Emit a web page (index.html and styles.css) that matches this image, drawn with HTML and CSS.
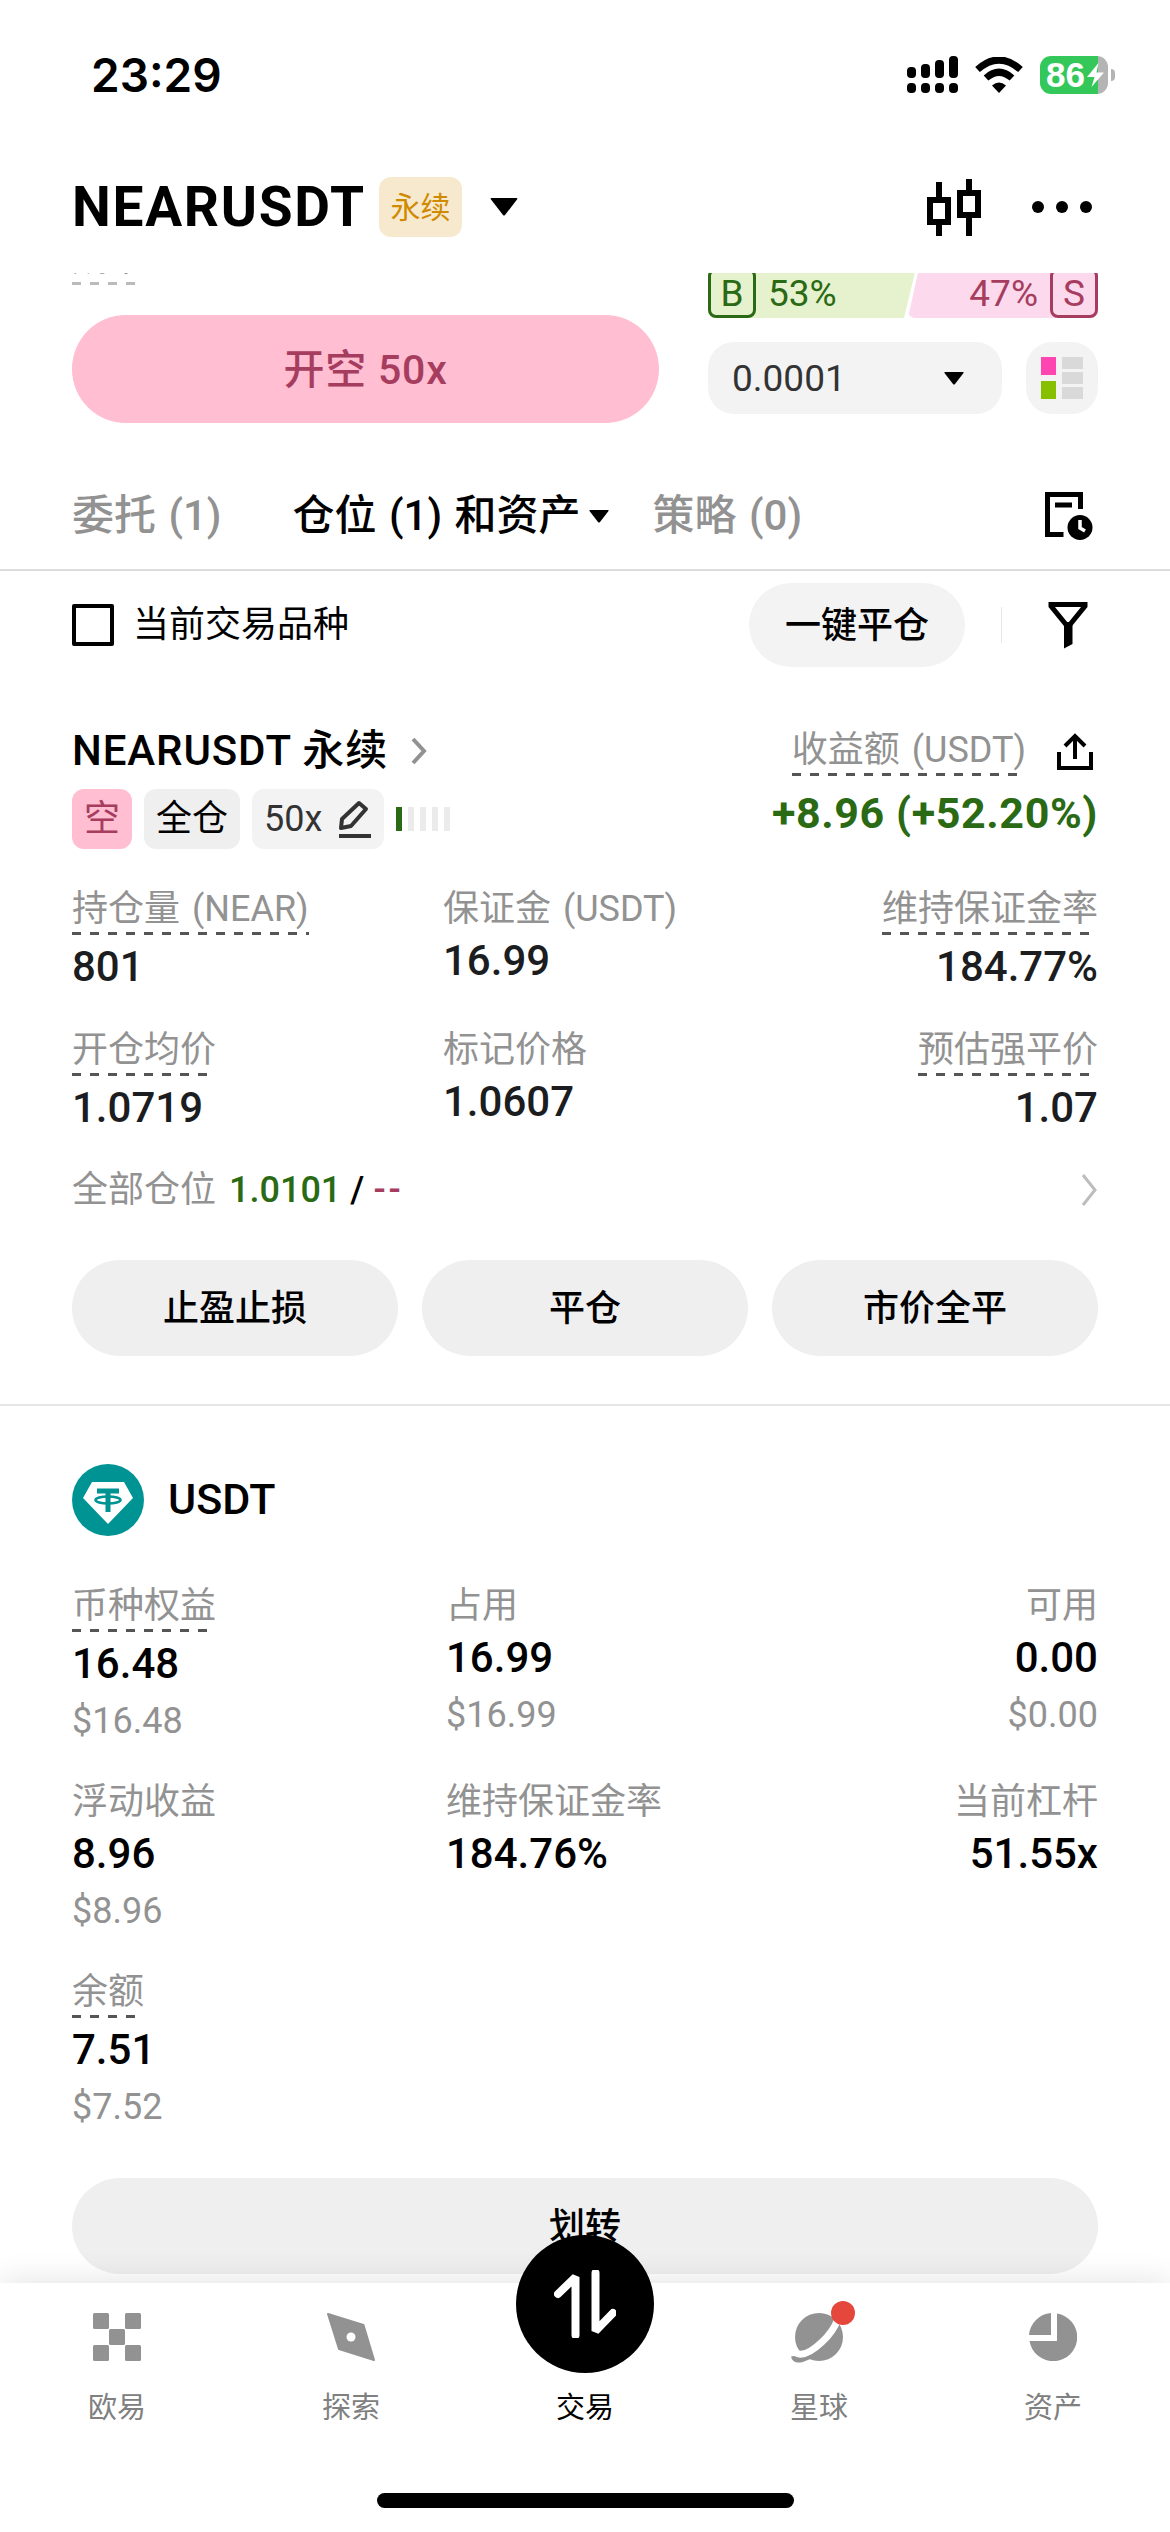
FILE: index.html
```html
<!DOCTYPE html>
<html lang="zh-CN">
<head>
<meta charset="utf-8">
<title>NEARUSDT 永续</title>
<link rel="stylesheet" href="styles.css">
</head>
<body>
<div class="screen">
  <div class="status">
    <span class="clock">23:29</span>
    <div class="status-icons">
      <svg width="51" height="37" viewBox="0 0 51 37"><rect x="0" y="11" width="9" height="11" rx="4"/><rect x="14" y="8" width="9" height="14" rx="4"/><rect x="28" y="4" width="9" height="18" rx="4"/><rect x="42" y="0" width="9" height="22" rx="4"/><rect x="0" y="27" width="9" height="10" rx="4"/><rect x="14" y="27" width="9" height="10" rx="4"/><rect x="28" y="27" width="9" height="10" rx="4"/><rect x="42" y="27" width="9" height="10" rx="4"/></svg>
      <svg class="wifi" width="48" height="36" viewBox="0 0 48 36"><path d="M24 36l-7-7.500q7-6 14 0z"/><path d="M2.500 12.500Q24-6.500 45.500 12.500M11 21Q24 9.500 37 21" fill="none" stroke="#000" stroke-width="7"/></svg>
      <div class="battery"><div class="battery-body"><b>86</b><svg width="17" height="24" viewBox="0 0 17 24"><path d="M11.500 0L0 14h7.500L4.500 24 17 9.500H9.500z" fill="#fff"/></svg></div><i class="battery-nub"></i></div>
    </div>
  </div>

  <header class="header">
    <h1>NEARUSDT</h1>
    <span class="perp">永续</span>
    <svg class="caret-lg" width="28" height="18" viewBox="0 0 28 18"><path d="M1.500 0h25q1.500 0 .5 1.500L15 17q-1 1-2 0L1 1.500Q0 0 1.500 0z"/></svg>
    <svg class="candles" width="54" height="57" viewBox="0 0 54 57" fill="none" stroke="#000" stroke-width="6"><path d="M12 3v54M42 0v57"/><rect x="3" y="21" width="18" height="22" fill="#fff"/><rect x="33" y="14" width="18" height="22" fill="#fff"/></svg>
    <svg width="60" height="12" viewBox="0 0 60 12"><circle cx="6" cy="6" r="6"/><circle cx="30" cy="6" r="6"/><circle cx="54" cy="6" r="6"/></svg>
  </header>

  <main class="content">
    <section class="order">
      <div class="order-form">
        <span class="label dashed faint">成本</span>
        <button class="short">开空 50x</button>
      </div>
      <div class="book">
        <div class="ratio">
          <div class="buy"><span class="side">B</span><span>53%</span></div>
          <div class="sell"><span>47%</span><span class="side">S</span></div>
        </div>
        <div class="depth">
          <div class="select"><span>0.0001</span><svg width="20" height="13" viewBox="0 0 20 13"><path d="M1 0h18q1 0 .5 1L11 12q-1 1-2 0L.5 1Q0 0 1 0z"/></svg></div>
          <div class="mode"><svg width="42" height="42" viewBox="0 0 42 42"><path fill="#ff46b0" d="M0 0h15v18H0z"/><path fill="#86c000" d="M0 24h15v18H0z"/><path fill="#d9d9d9" d="M21 0h21v12H21zM21 15h21v12H21zM21 30h21v12H21z"/></svg></div>
        </div>
      </div>
    </section>

    <nav class="tabs">
      <span>委托 (1)</span>
      <span class="tab-on">仓位 (1) 和资产<svg width="20" height="13" viewBox="0 0 20 13"><path d="M1 0h18q1 0 .5 1L11 12q-1 1-2 0L.5 1Q0 0 1 0z"/></svg></span>
      <span>策略 (0)</span>
      <svg class="history" width="48" height="48" viewBox="0 0 48 48"><path d="M18.500 42.500h-16v-40h33V17M10 13h17" fill="none" stroke="#000" stroke-width="5"/><circle cx="35" cy="35.500" r="12.500"/><path d="M35 28v8l5 3" fill="none" stroke="#fff" stroke-width="3.500"/></svg>
    </nav>

    <div class="filter">
      <i class="checkbox"></i>
      <span class="filter-name">当前交易品种</span>
      <button class="close-all">一键平仓</button>
      <i class="rule"></i>
      <svg width="40" height="47" viewBox="0 0 40 47"><path d="M3 2.500h34v1.500L22 22.500h-4L3 4z" fill="none" stroke="#000" stroke-width="5"/><path d="M16 22h8.500v20L16 46.500z"/></svg>
    </div>

    <section class="position">
      <div class="pos-head">
        <div>
          <h2>NEARUSDT 永续<svg width="18" height="28" viewBox="0 0 18 28"><path d="M3 2l11 12L3 26" fill="none" stroke="#929292" stroke-width="4"/></svg></h2>
          <div class="tags">
            <span class="tag short-tag">空</span>
            <span class="tag">全仓</span>
            <span class="tag lever">50x<svg width="34" height="38" viewBox="0 0 34 38"><path d="M3 28l1-9L21 3l7 6-15 17z" fill="none" stroke="#333" stroke-width="4" stroke-linejoin="round"/><path d="M1 34h32v4H1z" fill="#333"/></svg></span>
            <span class="risk"><i class="risk-on"></i><i></i><i></i><i></i><i></i></span>
          </div>
        </div>
        <div class="pnl">
          <div class="pnl-label"><span class="label dashed">收益额 (USDT)</span><svg width="36" height="37" viewBox="0 0 36 37" fill="none" stroke="#000" stroke-width="4"><path d="M2 19v16h32V19M18 26V3M8 13L18 3l10 10"/></svg></div>
          <div class="pnl-value">+8.96 (+52.20%)</div>
        </div>
      </div>

      <div class="stats pos-stats">
        <div><span class="label dashed">持仓量 (NEAR)</span><span class="value">801</span></div>
        <div><span class="label">保证金 (USDT)</span><span class="value">16.99</span></div>
        <div><span class="label dashed">维持保证金率</span><span class="value">184.77%</span></div>
        <div><span class="label dashed">开仓均价</span><span class="value">1.0719</span></div>
        <div><span class="label">标记价格</span><span class="value">1.0607</span></div>
        <div><span class="label dashed">预估强平价</span><span class="value">1.07</span></div>
      </div>

      <div class="tpsl"><span class="muted">全部仓位</span><span class="up">1.0101</span><span>/</span><span class="down">--</span><svg width="17" height="34" viewBox="0 0 17 34"><path d="M2 2l12 15L2 32" fill="none" stroke="#bdbdbd" stroke-width="3"/></svg></div>

      <div class="actions"><button>止盈止损</button><button>平仓</button><button>市价全平</button></div>
    </section>

    <section class="asset">
      <div class="coin"><svg width="72" height="72" viewBox="0 0 72 72"><circle cx="36" cy="36" r="36" fill="#009393"/><path d="M20 18h32l9 16-25 26-25-26z" fill="#fff"/><g fill="none" stroke="#009393"><path d="M25 27h22" stroke-width="5"/><path d="M36 28v20" stroke-width="5"/><ellipse cx="36" cy="36" rx="12.500" ry="3.500" stroke-width="2.500"/></g></svg><span>USDT</span></div>
      <div class="stats asset-stats">
        <div><span class="label dashed">币种权益</span><span class="value">16.48</span><span class="sub">$16.48</span></div>
        <div><span class="label">占用</span><span class="value">16.99</span><span class="sub">$16.99</span></div>
        <div><span class="label">可用</span><span class="value">0.00</span><span class="sub">$0.00</span></div>
        <div><span class="label">浮动收益</span><span class="value">8.96</span><span class="sub">$8.96</span></div>
        <div><span class="label">维持保证金率</span><span class="value">184.76%</span></div>
        <div><span class="label">当前杠杆</span><span class="value">51.55x</span></div>
        <div><span class="label dashed">余额</span><span class="value">7.51</span><span class="sub">$7.52</span></div>
      </div>
      <button class="transfer">划转</button>
    </section>
  </main>

  <footer class="tabbar">
    <div class="tabbar-items">
      <div><svg width="48" height="48" viewBox="0 0 48 48"><g fill="#929292"><rect width="16" height="16" rx="1.500"/><rect x="32" width="16" height="16" rx="1.500"/><rect x="16" y="16" width="16" height="16" rx="1.500"/><rect y="32" width="16" height="16" rx="1.500"/><rect x="32" y="32" width="16" height="16" rx="1.500"/></g></svg><span>欧易</span></div>
      <div><svg width="48" height="48" viewBox="0 0 48 48"><path d="M1 1l35.500 11L47 47 12 36z" fill="#929292" stroke="#929292" stroke-width="2" stroke-linejoin="round"/><circle cx="24" cy="24" r="4.500" fill="#fff"/></svg><span>探索</span></div>
      <div class="trade"><div class="trade-disc"><svg width="62" height="68" viewBox="0 0 62 68"><path d="M21.500 65V7L4 24M41.500 3v58L59 43" fill="none" stroke="#fff" stroke-width="8" stroke-linejoin="bevel" stroke-linecap="round"/></svg></div><span>交易</span></div>
      <div class="planet"><svg width="62" height="62" viewBox="0 0 62 62"><circle cx="31" cy="31" r="24" fill="#929292"/><path d="M6 50q1 5 8 3 10-3 15-8" fill="none" stroke="#929292" stroke-width="6"/><path d="M8 47q9 5 26-11Q45 26 50 13" fill="none" stroke="#fff" stroke-width="7"/></svg><i class="dot"></i><span>星球</span></div>
      <div><svg width="48" height="48" viewBox="0 0 48 48"><path d="M22 0v22H0A24 24 0 0 1 22 0zM28 .5A24 24 0 1 1 .5 28H28z" fill="#929292"/></svg><span>资产</span></div>
    </div>
    <i class="home"></i>
  </footer>
</div>
</body>
</html>
```
FILE: styles.css
```css
* { box-sizing: border-box; }
body { margin: 0; background: #fff; color: #000; font-family: Roboto, "Noto Sans CJK SC", sans-serif; }
h1, h2 { margin: 0; }
i { display: block; flex: none; }
svg { display: block; flex: none; }
span, b, h1, h2, button { white-space: nowrap; }
button { display: block; border: 0; padding: 2px 0 0; margin: 0; font: 500 36px/1 Roboto, "Noto Sans CJK SC", sans-serif; color: #000; }

.screen { width: 1170px; height: 2532px; display: flex; flex-direction: column; overflow: hidden; }

/* status bar */
.status { height: 149px; padding: 0 55px 0 91px; display: flex; align-items: center; justify-content: space-between; }
.clock { font: 600 46px/48px Inter, sans-serif; }
.status-icons { display: flex; align-items: center; }
.wifi { margin: 0 17px; }
.battery { display: flex; align-items: center; gap: 3px; }
.battery-body { width: 68px; height: 38px; border-radius: 11px; padding-left: 6px; background: linear-gradient(90deg, #34c85a 58px, #b4b4b4 58px); display: flex; align-items: center; }
.battery-body b { font: 700 35px/38px "Liberation Sans", sans-serif; color: #fff; }
.battery-body svg { margin-left: 2px; }
.battery-nub { width: 4px; height: 12px; border-radius: 0 4px 4px 0; background: #b4b4b4; }

/* title bar */
.header { height: 124px; padding: 0 78px 8px 72px; display: flex; align-items: center; }
.header h1 { font-size: 55px; line-height: 60px; font-weight: 700; width: 293px; letter-spacing: 1.7px; }
.perp { margin-left: 14px; width: 83px; height: 60px; border-radius: 12px; background: #f7e9cd; color: #d08a00; font-size: 30px; line-height: 61px; text-align: center; }
.caret-lg { margin-left: 28px; }
.candles { margin-left: auto; margin-right: 51px; }

/* order panel */
.content { flex: 1; overflow: hidden; }
.order { margin-top: -40px; padding: 0 72px; display: flex; justify-content: space-between; }
.label { display: block; width: fit-content; height: 52px; font-size: 36px; line-height: 52px; word-spacing: 3px; color: #929292; }
.dashed { margin-bottom: 6px; background: repeating-linear-gradient(90deg, #555 0 9px, transparent 9px 18px) left bottom / 100% 3px no-repeat; }
.faint { background-image: repeating-linear-gradient(90deg, #bbb 0 9px, transparent 9px 18px); }
.short { width: 587px; height: 108px; margin-top: 30px; border-radius: 54px; background: #ffbed1; color: #a63d5f; font-size: 41px; letter-spacing: .8px; }
.order-form .label { margin-bottom: 0; }
.book { width: 390px; padding-top: 35px; }
.ratio { display: flex; justify-content: space-between; font-size: 37px; line-height: 51px; }
.ratio > div { display: flex; height: 50px; border-radius: 7px; }
.buy { width: 208px; gap: 12px; background: #e6f1cd; color: #2a6a14; clip-path: polygon(0 0, 100% 0, 196px 100%, 0 100%); }
.sell { width: 190px; margin-left: -8px; gap: 12px; justify-content: flex-end; background: #fcd9ec; color: #a63d5f; clip-path: polygon(11px 0, 100% 0, 100% 100%, 0 100%); }
.side { width: 48px; border: 3px solid; border-radius: 8px; line-height: 45px; text-align: center; }
.depth { margin-top: 24px; display: flex; justify-content: space-between; }
.select { width: 294px; height: 72px; padding: 0 38px 0 24px; border-radius: 26px; background: #f3f3f3; display: flex; align-items: center; justify-content: space-between; font-size: 37px; color: #333; }
.mode { width: 72px; height: 72px; border-radius: 26px; background: #f3f3f3; display: grid; place-items: center; }

/* tabs */
.tabs { margin-top: 46px; height: 102px; padding: 0 77px 6px 72px; border-bottom: 2px solid #dcdcdc; display: flex; align-items: center; font-size: 42px; font-weight: 500; line-height: 50px; word-spacing: 2px; color: #929292; }
.tabs .tab-on { margin: 0 44px 0 71px; color: #000; display: flex; align-items: center; gap: 8px; }
.history { margin-left: auto; }

/* filter row */
.filter { height: 108px; padding: 0 82px 0 72px; display: flex; align-items: center; }
.checkbox { width: 42px; height: 42px; border: 4px solid #000; border-radius: 2px; }
.filter-name { margin-left: 19px; font-size: 36px; line-height: 50px; }
.close-all { margin-left: auto; width: 216px; height: 84px; border-radius: 42px; background: #f3f3f3; }
.rule { margin: 0 46px 0 36px; width: 1px; height: 36px; background: #e6e6e6; }

/* position card */
.position { padding: 45px 72px 48px; border-bottom: 2px solid #e6e6e6; }
.pos-head { display: flex; justify-content: space-between; }
h2 { height: 52px; margin-bottom: 13px; font-size: 42px; line-height: 52px; font-weight: 500; letter-spacing: .9px; padding-top: 1px; display: flex; align-items: center; gap: 22px; }
.tags { display: flex; align-items: center; gap: 12px; }
.tag { height: 60px; padding: 0 12px; border-radius: 12px; background: #efefef; font-size: 36px; line-height: 60px; }
.short-tag { background: #ffbed1; color: #a63d5f; }
.lever { width: 132px; background: #f3f3f3; color: #333; display: flex; align-items: center; justify-content: space-between; }
.risk { display: flex; gap: 6px; }
.risk i { width: 6px; height: 24px; background: #ebebeb; }
.risk .risk-on { background: #2a6a14; }
.pnl-label { display: flex; justify-content: flex-end; gap: 31px; padding-right: 5px; }
.pnl-label svg { margin-top: 9px; }
.pnl-value { font-size: 43px; line-height: 60px; font-weight: 700; letter-spacing: .6px; color: #2a6a14; text-align: right; margin-top: 1px; }
.stats { display: grid; }
.stats > div:nth-child(3n) { justify-self: end; display: flex; flex-direction: column; align-items: flex-end; }
.pos-stats { margin-top: 34px; grid-template-columns: 371px 371px 1fr; grid-auto-rows: 141px; }
.pos-stats .value { color: #1b1d20; }
.value { display: block; height: 50px; font-size: 42px; line-height: 51px; font-weight: 500; }
.tpsl { height: 50px; display: flex; align-items: center; font-size: 36px; line-height: 50px; font-weight: 500; }
.tpsl svg { margin-left: auto; }
.muted { color: #929292; font-weight: 400; margin-right: 13px; }
.up { color: #2a6a14; margin-right: 9px; }
.down { color: #a63d5f; margin-left: 9px; letter-spacing: 3px; }
.actions { margin-top: 45px; display: grid; grid-template-columns: repeat(3, 1fr); gap: 24px; }
.actions button, .transfer { height: 96px; border-radius: 48px; background: #efefef; }

/* asset card */
.asset { padding: 58px 72px 0; }
.coin { display: flex; align-items: center; gap: 24px; font-size: 43px; line-height: 50px; font-weight: 500; }
.coin span { margin-bottom: 2px; }
.asset-stats { margin-top: 44px; grid-template-columns: 374px 374px 1fr; row-gap: 22px; }
.sub { display: block; height: 66px; line-height: 67px; font-size: 36px; color: #929292; }
.transfer { margin-top: 38px; width: 100%; }

/* bottom bar */
.tabbar { position: relative; height: 249px; background: #fff; box-shadow: 0 -2px 30px rgba(0, 0, 0, .11); }
.tabbar-items { display: grid; grid-template-columns: repeat(5, 234px); font-size: 29px; line-height: 40px; color: #808080; }
.tabbar-items > div { height: 150px; padding-top: 30px; display: flex; flex-direction: column; align-items: center; }
.tabbar-items span { margin-top: 27px; }
.tabbar-items .trade { padding-top: 0; color: #000; }
.trade-disc { width: 138px; height: 138px; margin-top: -48px; border-radius: 50%; background: #000; display: grid; place-items: center; }
.tabbar-items .trade span { margin-top: 15px; }
.tabbar-items .planet { position: relative; padding-top: 23px; }
.tabbar-items .planet span { margin-top: 20px; }
.dot { position: absolute; left: 129px; top: 18px; width: 24px; height: 24px; border-radius: 50%; background: #e5473d; }
.home { width: 417px; height: 15px; margin: 60px auto 0; border-radius: 8px; background: #000; }
```
